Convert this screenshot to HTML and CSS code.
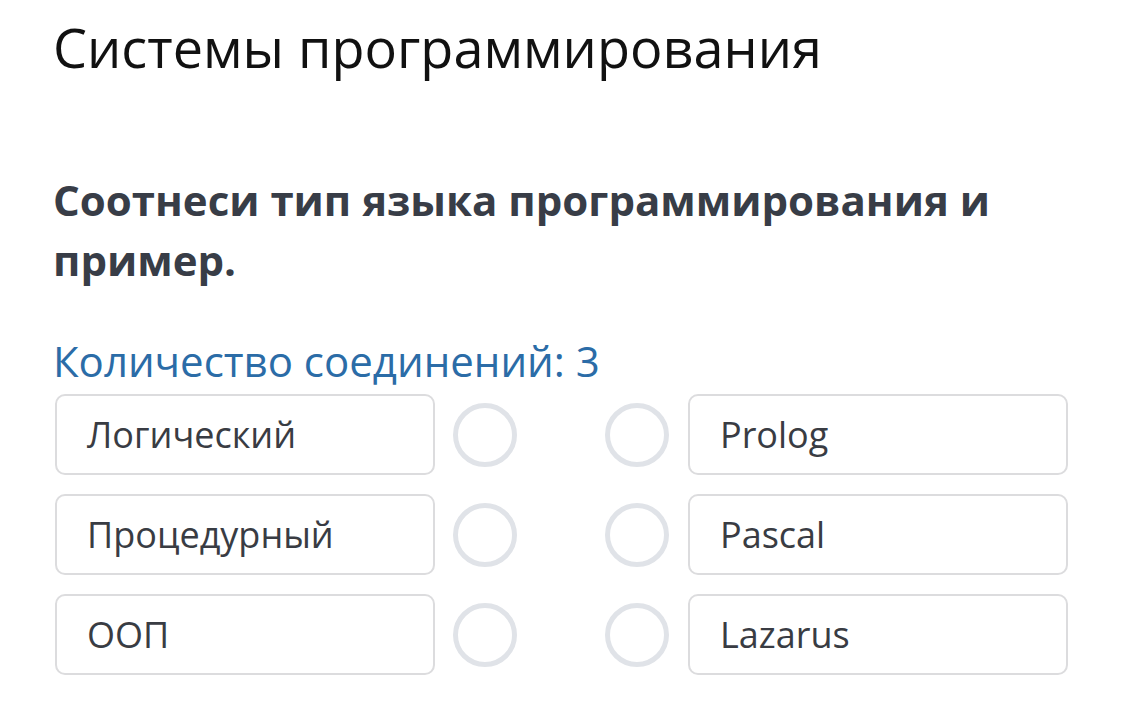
FILE: index.html
```html
<!DOCTYPE html>
<html lang="ru">

<head>
  <meta charset="UTF-8">
  <meta name="viewport" content="width=device-width, initial-scale=1.0">
  <title>Системы программирования</title>
  <link rel="stylesheet" href="styles.css">
</head>

<body>
  <div class="page">
    <h1 class="title">Системы программирования</h1>
    <p class="question">Соотнеси тип языка программирования и пример.</p>
    <p class="count">Количество соединений: 3</p>

    <div class="match">
      <div class="row">
        <div class="item">Логический</div>
        <div class="dots"><span class="dot"></span><span class="dot"></span></div>
        <div class="item">Prolog</div>
      </div>
      <div class="row">
        <div class="item">Процедурный</div>
        <div class="dots"><span class="dot"></span><span class="dot"></span></div>
        <div class="item">Pascal</div>
      </div>
      <div class="row">
        <div class="item">ООП</div>
        <div class="dots"><span class="dot"></span><span class="dot"></span></div>
        <div class="item">Lazarus</div>
      </div>
    </div>
  </div>
</body>

</html>
```

FILE: styles.css
```css
* {
  box-sizing: border-box;
  font-family: "Open Sans", "Noto Sans", sans-serif;
}

body {
  margin: 0;
  background: #fff;
}

.page {
  width: 1068px;
  padding: 14px 0 0 55px;
}

.title {
  margin: 0 0 0 -2px;
  font-size: 54px;
  font-weight: 400;
  line-height: 66px;
  color: #111;
}

.question {
  margin: 90px 0 0 -2px;
  font-size: 42px;
  font-weight: 700;
  line-height: 60px;
  color: #383d47;
}

.count {
  margin: 46px 0 0 -2px;
  font-size: 42px;
  line-height: 50px;
  color: #2b6ca7;
}

.match {
  display: flex;
  flex-direction: column;
  gap: 19px;
  margin-top: 8px;
}

.row {
  display: grid;
  grid-template-columns: 380px 1fr 380px;
  height: 81px;
}

.item {
  display: flex;
  align-items: center;
  padding-left: 30px;
  border: 2px solid #dcdcde;
  border-radius: 10px;
  font-size: 36px;
  color: #393c43;
}

.dots {
  display: flex;
  align-items: center;
  justify-content: space-between;
  padding: 0 19px 0 18px;
}

.dot {
  width: 64px;
  height: 64px;
  border: 5px solid #e0e3e8;
  border-radius: 50%;
}
```
